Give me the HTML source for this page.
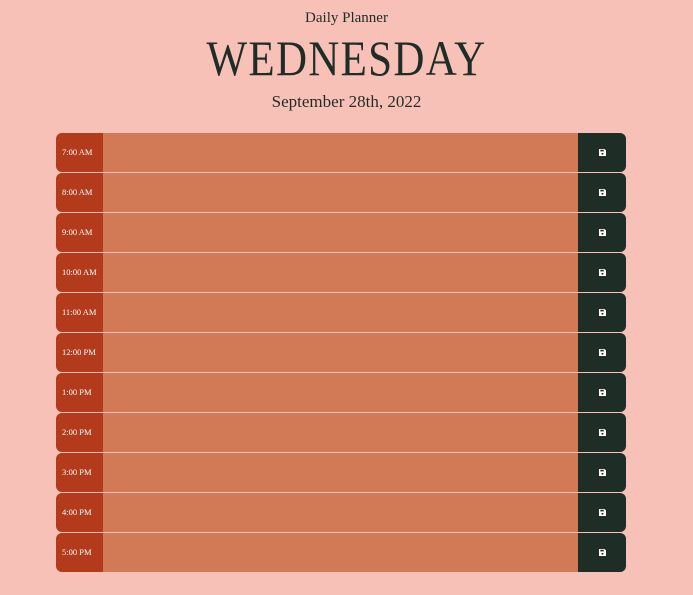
<!DOCTYPE html>
<html><head><style>
body{margin:0;background:#f8c1b8;width:693px;height:595px;overflow:hidden;font-family:"Liberation Serif",serif;color:#1f2d26}
.t1{position:absolute;top:10px;left:0;width:693px;text-align:center;font-size:15px}
.t2{position:absolute;top:30px;left:0;width:693px;text-align:center;font-size:50px;line-height:56px;transform:scaleX(0.86);letter-spacing:1.5px}
.t3{position:absolute;top:92px;left:0;width:693px;text-align:center;font-size:17px}
.row{position:absolute;left:56px;width:570px;height:39px;display:flex}
.h{width:47px;background:#b33b1b;border-radius:6px 0 0 6px;color:#fff;font-size:8.5px;line-height:39px;padding-left:6px;box-sizing:border-box;white-space:nowrap}
.ta{flex:1;background:#d27955}
.s{width:48px;background:#1e2d25;border-radius:0 6px 6px 0;display:flex;align-items:center;justify-content:center}
</style></head><body>
<div class="t1">Daily Planner</div>
<div class="t2">WEDNESDAY</div>
<div class="t3">September 28th, 2022</div>
<div class="row" style="top:133px"><div class="h">7:00 AM</div><div class="ta"></div><div class="s"><svg width="7" height="7" viewBox="0 0 7 7"><path d="M0 0H5.5L7 1.5V7H0Z" fill="#fff"/><rect x="1.3" y="0.8" width="3.5" height="1.6" fill="#1e2d25"/><rect x="2.6" y="4" width="1.8" height="1.6" fill="#1e2d25"/></svg></div></div>
<div class="row" style="top:173px"><div class="h">8:00 AM</div><div class="ta"></div><div class="s"><svg width="7" height="7" viewBox="0 0 7 7"><path d="M0 0H5.5L7 1.5V7H0Z" fill="#fff"/><rect x="1.3" y="0.8" width="3.5" height="1.6" fill="#1e2d25"/><rect x="2.6" y="4" width="1.8" height="1.6" fill="#1e2d25"/></svg></div></div>
<div class="row" style="top:213px"><div class="h">9:00 AM</div><div class="ta"></div><div class="s"><svg width="7" height="7" viewBox="0 0 7 7"><path d="M0 0H5.5L7 1.5V7H0Z" fill="#fff"/><rect x="1.3" y="0.8" width="3.5" height="1.6" fill="#1e2d25"/><rect x="2.6" y="4" width="1.8" height="1.6" fill="#1e2d25"/></svg></div></div>
<div class="row" style="top:253px"><div class="h">10:00 AM</div><div class="ta"></div><div class="s"><svg width="7" height="7" viewBox="0 0 7 7"><path d="M0 0H5.5L7 1.5V7H0Z" fill="#fff"/><rect x="1.3" y="0.8" width="3.5" height="1.6" fill="#1e2d25"/><rect x="2.6" y="4" width="1.8" height="1.6" fill="#1e2d25"/></svg></div></div>
<div class="row" style="top:293px"><div class="h">11:00 AM</div><div class="ta"></div><div class="s"><svg width="7" height="7" viewBox="0 0 7 7"><path d="M0 0H5.5L7 1.5V7H0Z" fill="#fff"/><rect x="1.3" y="0.8" width="3.5" height="1.6" fill="#1e2d25"/><rect x="2.6" y="4" width="1.8" height="1.6" fill="#1e2d25"/></svg></div></div>
<div class="row" style="top:333px"><div class="h">12:00 PM</div><div class="ta"></div><div class="s"><svg width="7" height="7" viewBox="0 0 7 7"><path d="M0 0H5.5L7 1.5V7H0Z" fill="#fff"/><rect x="1.3" y="0.8" width="3.5" height="1.6" fill="#1e2d25"/><rect x="2.6" y="4" width="1.8" height="1.6" fill="#1e2d25"/></svg></div></div>
<div class="row" style="top:373px"><div class="h">1:00 PM</div><div class="ta"></div><div class="s"><svg width="7" height="7" viewBox="0 0 7 7"><path d="M0 0H5.5L7 1.5V7H0Z" fill="#fff"/><rect x="1.3" y="0.8" width="3.5" height="1.6" fill="#1e2d25"/><rect x="2.6" y="4" width="1.8" height="1.6" fill="#1e2d25"/></svg></div></div>
<div class="row" style="top:413px"><div class="h">2:00 PM</div><div class="ta"></div><div class="s"><svg width="7" height="7" viewBox="0 0 7 7"><path d="M0 0H5.5L7 1.5V7H0Z" fill="#fff"/><rect x="1.3" y="0.8" width="3.5" height="1.6" fill="#1e2d25"/><rect x="2.6" y="4" width="1.8" height="1.6" fill="#1e2d25"/></svg></div></div>
<div class="row" style="top:453px"><div class="h">3:00 PM</div><div class="ta"></div><div class="s"><svg width="7" height="7" viewBox="0 0 7 7"><path d="M0 0H5.5L7 1.5V7H0Z" fill="#fff"/><rect x="1.3" y="0.8" width="3.5" height="1.6" fill="#1e2d25"/><rect x="2.6" y="4" width="1.8" height="1.6" fill="#1e2d25"/></svg></div></div>
<div class="row" style="top:493px"><div class="h">4:00 PM</div><div class="ta"></div><div class="s"><svg width="7" height="7" viewBox="0 0 7 7"><path d="M0 0H5.5L7 1.5V7H0Z" fill="#fff"/><rect x="1.3" y="0.8" width="3.5" height="1.6" fill="#1e2d25"/><rect x="2.6" y="4" width="1.8" height="1.6" fill="#1e2d25"/></svg></div></div>
<div class="row" style="top:533px"><div class="h">5:00 PM</div><div class="ta"></div><div class="s"><svg width="7" height="7" viewBox="0 0 7 7"><path d="M0 0H5.5L7 1.5V7H0Z" fill="#fff"/><rect x="1.3" y="0.8" width="3.5" height="1.6" fill="#1e2d25"/><rect x="2.6" y="4" width="1.8" height="1.6" fill="#1e2d25"/></svg></div></div>
</body></html>
